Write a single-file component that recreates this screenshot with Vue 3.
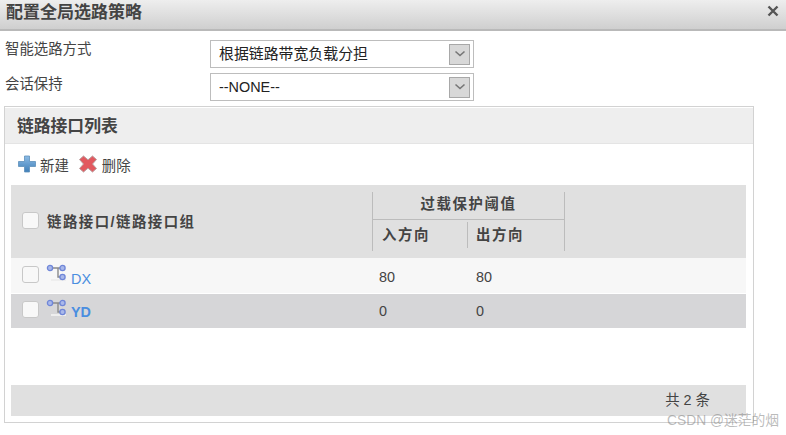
<script setup>
const rows = [
  { name: 'DX', inbound: 80, outbound: 80, alt: false },
  { name: 'YD', inbound: 0, outbound: 0, alt: true }
]
const fields = [
  { label: '智能选路方式', value: '根据链路带宽负载分担', cjk: true },
  { label: '会话保持', value: '--NONE--', cjk: false }
]
</script>

<template>
  <div class="dialog">
    <header class="titlebar">
      <span class="title">配置全局选路策略</span>
      <svg class="close" width="12" height="12" viewBox="0 0 12 12"><path d="M1.5 1.5l9 9M10.500 1.500l-9 9" stroke="#555" stroke-width="2.400" fill="none"/></svg>
    </header>

    <div class="form">
      <div v-for="f in fields" :key="f.label" class="field">
        <label class="field-label">{{ f.label }}</label>
        <div class="select">
          <span class="select-text" :class="{ big: f.cjk }">{{ f.value }}</span>
          <span class="select-btn">
            <svg width="12" height="8" viewBox="0 0 12 8"><path d="M1.500 1.500L6 5.500l4.500-4" stroke="#777" stroke-width="1.600" fill="none"/></svg>
          </span>
        </div>
      </div>
    </div>

    <section class="panel">
      <div class="panel-head">链路接口列表</div>
      <div class="toolbar">
        <svg width="18" height="18" viewBox="0 0 18 18">
          <defs><linearGradient id="pl" x1="0" y1="0" x2="0" y2="1"><stop offset="0" stop-color="#8dbce6"/><stop offset="1" stop-color="#3f7fb8"/></linearGradient></defs>
          <path d="M6.500 1h5v5.500H17.500v5H11.500V17h-5V11.500H.5v-5H6.500z" fill="url(#pl)" stroke="#5d8fba" stroke-width=".8"/>
        </svg>
        <span class="tool-text">新建</span>
        <svg class="del" width="18" height="18" viewBox="0 0 18 18">
          <path d="M4.500 1L9 4.800 13.500 1 17.500 4.500 13.500 9l4 4.500-4 3.500L9 13.200 4.500 17 .5 13.500 4.500 9 .5 4.500z" fill="#e2595f" stroke="#b9a0a0" stroke-width="1" stroke-linejoin="round"/>
        </svg>
        <span class="tool-text del-text">删除</span>
      </div>

      <div class="thead">
        <div class="th-name">
          <span class="check"></span>
          <span class="th-name-text">链路接口/链路接口组</span>
        </div>
        <div class="th-group">
          <div class="th-group-title">过载保护阈值</div>
          <div class="th-sub">
            <span class="sub first">入方向</span>
            <span class="sub second">出方向</span>
          </div>
        </div>
      </div>

      <div v-for="r in rows" :key="r.name" class="row" :class="{ alt: r.alt }">
        <div class="cell-name">
          <span class="check"></span>
          <svg class="tree" width="21" height="19" viewBox="0 0 21 19">
            <path d="M4 5H16M12 5V14H16" stroke="#8a8a8a" stroke-width="1.400" fill="none"/>
            <path d="M5 17H20" stroke="#eeeeee" stroke-width="2"/>
            <circle cx="4" cy="5" r="2.600" fill="#a9b8ea" stroke="#6f86d8" stroke-width="1.300"/>
            <circle cx="16.500" cy="5" r="2.600" fill="#a9b8ea" stroke="#6f86d8" stroke-width="1.300"/>
            <circle cx="16.500" cy="14" r="2.600" fill="#a9b8ea" stroke="#6f86d8" stroke-width="1.300"/>
          </svg>
          <a class="link">{{ r.name }}</a>
        </div>
        <div class="cell-val">{{ r.inbound }}</div>
        <div class="cell-val">{{ r.outbound }}</div>
      </div>

      <div class="spacer"></div>
      <footer class="tfoot">共 2 条</footer>
    </section>

    <div class="watermark">CSDN @迷茫的烟</div>
  </div>
</template>

<style>
html, body { margin: 0; overflow: hidden; background: #fff; }
</style>

<style scoped>
.dialog {
  position: relative;
  width: 786px;
  height: 435px;
  overflow: hidden;
  background: #fff;
  color: #3c3c3c;
  font-family: "Liberation Sans", "Noto Sans CJK SC", sans-serif;
  font-size: 14.400px;
}
.titlebar {
  box-sizing: border-box;
  height: 31px;
  padding: 0 7px 8px 6px;
  display: flex;
  align-items: center;
  justify-content: space-between;
  background: linear-gradient(#eeeeee, #cfcfcf);
  border-bottom: 2px solid #b9b9b9;
}
.title { font-size: 17px; font-weight: 700; color: #444; }
.form {
  padding: 9px 0 0 5px;
  display: flex;
  flex-direction: column;
  gap: 5px;
}
.field { display: flex; height: 28px; }
.field-label { width: 205px; line-height: 18px; color: #444; }
.field:last-child .field-label { padding-top: 2px; }
.select {
  box-sizing: border-box;
  width: 264px;
  border: 1px solid #bdbdbd;
  display: flex;
  align-items: center;
  justify-content: space-between;
  padding: 0 3px 0 8px;
  color: #222;
}
.select-text.big { font-size: 14.900px; margin-top: -3px; }
.select-btn {
  box-sizing: border-box;
  width: 21px;
  height: 21px;
  background: #d8d8d8;
  border: 1px solid #a8a8a8;
  display: flex;
  align-items: center;
  justify-content: center;
}
.panel {
  box-sizing: border-box;
  width: 750px;
  height: 317px;
  margin: 5px 0 0 4px;
  padding: 0 7px 0 6px;
  border: 1px solid #d2d2d2;
  display: flex;
  flex-direction: column;
}
.panel-head {
  box-sizing: border-box;
  height: 36px;
  margin: 1px -7px 0 -6px;
  padding-left: 12px;
  background: #eeeeee;
  border-bottom: 1px solid #e4e4e4;
  font-size: 16.800px;
  font-weight: 700;
  line-height: 37px;
  color: #444;
}
.toolbar {
  height: 41px;
  display: flex;
  align-items: center;
  padding: 0 0 1px 7px;
  box-sizing: border-box;
}
.tool-text { margin-left: 4px; color: #444; }
.del { margin-left: 10px; }
.del-text { margin-left: 5px; }
.thead {
  height: 73px;
  background: #e0e0e0;
  display: flex;
  font-size: 14.400px;
  font-weight: 700;
  color: #444;
}
.th-name {
  width: 361px;
  box-sizing: border-box;
  padding: 0 0 2px 11px;
  display: flex;
  align-items: center;
}
.th-name-text { margin-left: 8px; letter-spacing: 1.500px; }
.th-group {
  box-sizing: border-box;
  width: 193px;
  height: 59px;
  margin-top: 7px;
  border-left: 1px solid #bcbcbc;
  border-right: 1px solid #bcbcbc;
}
.th-group-title {
  box-sizing: border-box;
  height: 28px;
  border-bottom: 1px solid #bcbcbc;
  text-align: center;
  line-height: 25px;
  letter-spacing: 1.600px;
}
.th-sub { display: flex; padding-top: 2px; }
.sub {
  box-sizing: border-box;
  height: 26px;
  line-height: 26px;
  letter-spacing: 1.600px;
}
.sub.first { width: 94px; padding-left: 9px; }
.sub.second { padding-left: 8px; width: 97px; border-left: 1px solid #bcbcbc; }
.row {
  display: grid;
  grid-template-columns: 361px 97px 1fr;
  height: 35px;
  background: #f7f7f7;
  align-items: center;
}
.row:not(.alt) .cell-val { padding-top: 2px; }
.row.alt { height: 34px; margin-top: 1px; background: #d6d6d8; }
.cell-name {
  display: flex;
  align-items: flex-start;
  padding: 8px 0 0 11px;
  box-sizing: border-box;
  height: 100%;
}
.row.alt .cell-name { padding-top: 7px; }
.cell-val { padding-left: 7px; color: #444; }
.check {
  box-sizing: border-box;
  flex: none;
  width: 17px;
  height: 17px;
  background: #f8f8f8;
  border: 1px solid #c8c8c8;
  border-radius: 3px;
}
.tree { margin: -3px 0 0 7px; flex: none; }
.link { color: #4a8ee0; margin: 5px 0 0 4px; line-height: 17px; }
.row.alt .link { font-weight: 700; margin-top: 3px; }
.spacer { flex: 1; }
.tfoot {
  box-sizing: border-box;
  height: 31px;
  margin-bottom: 6px;
  background: #e0e0e0;
  line-height: 30px;
  text-align: right;
  padding-right: 36px;
  color: #444;
}
.watermark {
  position: absolute;
  left: 667px;
  top: 409px;
  font-size: 13.800px;
  color: rgba(120, 120, 120, 0.5);
  white-space: nowrap;
}
</style>
